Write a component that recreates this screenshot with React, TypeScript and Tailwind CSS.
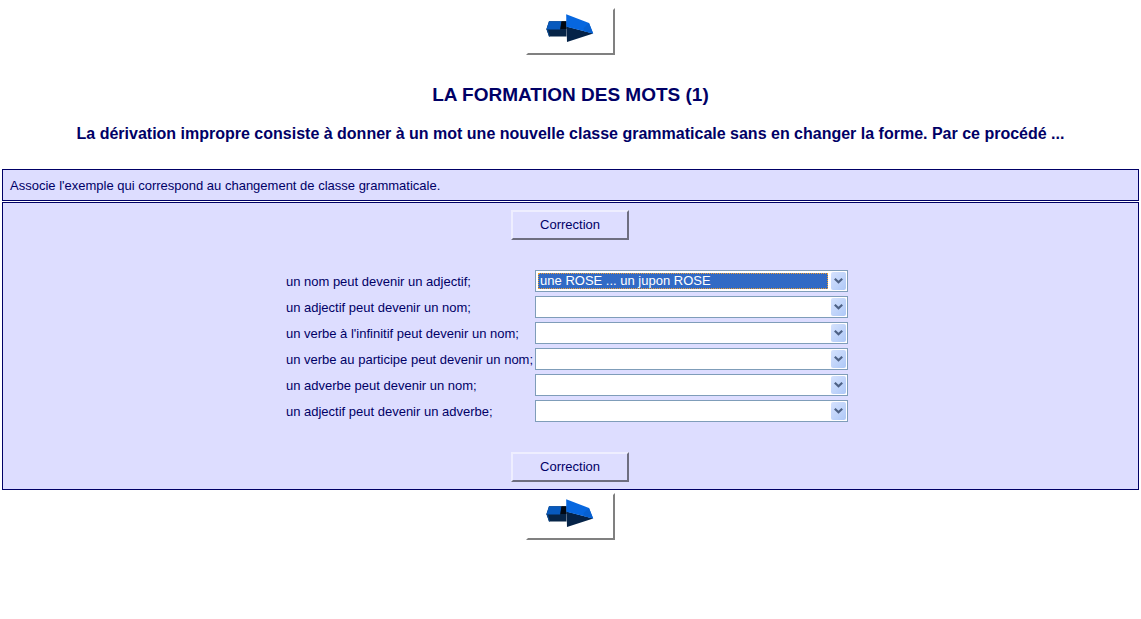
import { useState } from "react";

const rows = [
  "un nom peut devenir un adjectif;",
  "un adjectif peut devenir un nom;",
  "un verbe à l'infinitif peut devenir un nom;",
  "un verbe au participe peut devenir un nom;",
  "un adverbe peut devenir un nom;",
  "un adjectif peut devenir un adverbe;",
];

const example = "une ROSE ... un jupon ROSE";

function NextButton() {
  return (
    <button
      type="button"
      aria-label="Suivant"
      className="flex h-[47px] w-[89px] items-start justify-center border-2 border-t-white border-l-white border-r-[#808080] border-b-[#808080] bg-white pt-1 pr-[2px]"
    >
      <svg width="48" height="29" viewBox="0 0 48 29">
        <path d="M3 7.3 20.5 7.3V22.5H3L.4 15Z" fill="#062447" />
        <path d="M3 7.3H15.5L14 15.5H.4Z" fill="#0759bd" />
        <path d="M.4 15 2 15.5 4 22.5H3Z" fill="#08468c" />
        <path d="M15.5 7.3H20.5V15H14.5Z" fill="#010812" />
        <path d="M20.2.3 21 28 47.2 19.6 20.5 12.5Z" fill="#052348" />
        <path d="M20.2.3 43 9 47.2 19.6 20.3 12.8Z" fill="#0767df" />
        <path d="M37.5 14.2 43 9 47.2 19.6 39 17.5Z" fill="#0760d0" />
      </svg>
    </button>
  );
}

function CheckButton() {
  return (
    <button
      type="button"
      className="h-[30px] w-[118px] border-2 border-t-[#eeeeff] border-l-[#eeeeff] border-r-[#6e6e80] border-b-[#6e6e80] bg-[#ddddff] text-center"
    >
      Correction
    </button>
  );
}

function Row({ label, index }: { label: string; index: number }) {
  const [value, setValue] = useState(index === 0 ? example : "");
  const id = `choix-${index}`;
  const look =
    index === 0
      ? "bg-[#316ac5] text-white outline-1 -outline-offset-1 outline-dotted outline-[#f0a030]"
      : "bg-white text-[#000066]";
  return (
    <>
      <label htmlFor={id} className="pt-[2px] whitespace-nowrap">
        {label}
      </label>
      <div className="flex h-[22px] items-center border border-[#7f9db9] bg-white pr-px pl-[2px]">
        <select
          id={id}
          value={value}
          onChange={(e) => setValue(e.target.value)}
          className={`h-4 min-w-0 flex-1 appearance-none pl-[2px] text-[13px] leading-4 ${look}`}
        >
          <option value=""></option>
          <option value={example}>{example}</option>
        </select>
        <span className="pointer-events-none ml-[3px] flex h-[18px] w-[15px] items-center justify-center rounded-[2px] bg-linear-to-br from-[#d5e2fd] to-[#aec8f7]">
          <svg width="9" height="6" viewBox="0 0 9 6" fill="none">
            <path d="M.8.8 4.5 4.3 8.2.8" stroke="#4d6185" strokeWidth="2.2" />
          </svg>
        </span>
      </div>
    </>
  );
}

export default function App() {
  return (
    <div className="flex flex-col bg-white px-[2px] pt-2 font-['Liberation_Sans',Arial,sans-serif] text-[13px] leading-4 text-[#000066]">
      <div className="flex justify-center">
        <NextButton />
      </div>
      <header className="pt-7 pb-6 text-center font-bold">
        <h1 className="text-[19px] leading-6">LA FORMATION DES MOTS (1)</h1>
        <h2 className="pt-[17px] text-[16px] leading-5">
          La dérivation impropre consiste à donner à un mot une nouvelle classe grammaticale sans en
          changer la forme. Par ce procédé ...
        </h2>
      </header>
      <p className="mt-px border border-[#000066] bg-[#ddddff] px-[7px] pt-2 pb-1.5">
        Associe l'exemple qui correspond au changement de classe grammaticale.
      </p>
      <main className="mt-px flex flex-col items-center border border-[#000066] bg-[#ddddff] py-[7px] pr-px">
        <CheckButton />
        <form className="grid grid-cols-[auto_313px] items-center gap-x-[2px] gap-y-1 py-[30px] pr-1.5">
          {rows.map((label, i) => (
            <Row key={label} label={label} index={i} />
          ))}
        </form>
        <CheckButton />
      </main>
      <div className="flex justify-center pt-[3px]">
        <NextButton />
      </div>
    </div>
  );
}
